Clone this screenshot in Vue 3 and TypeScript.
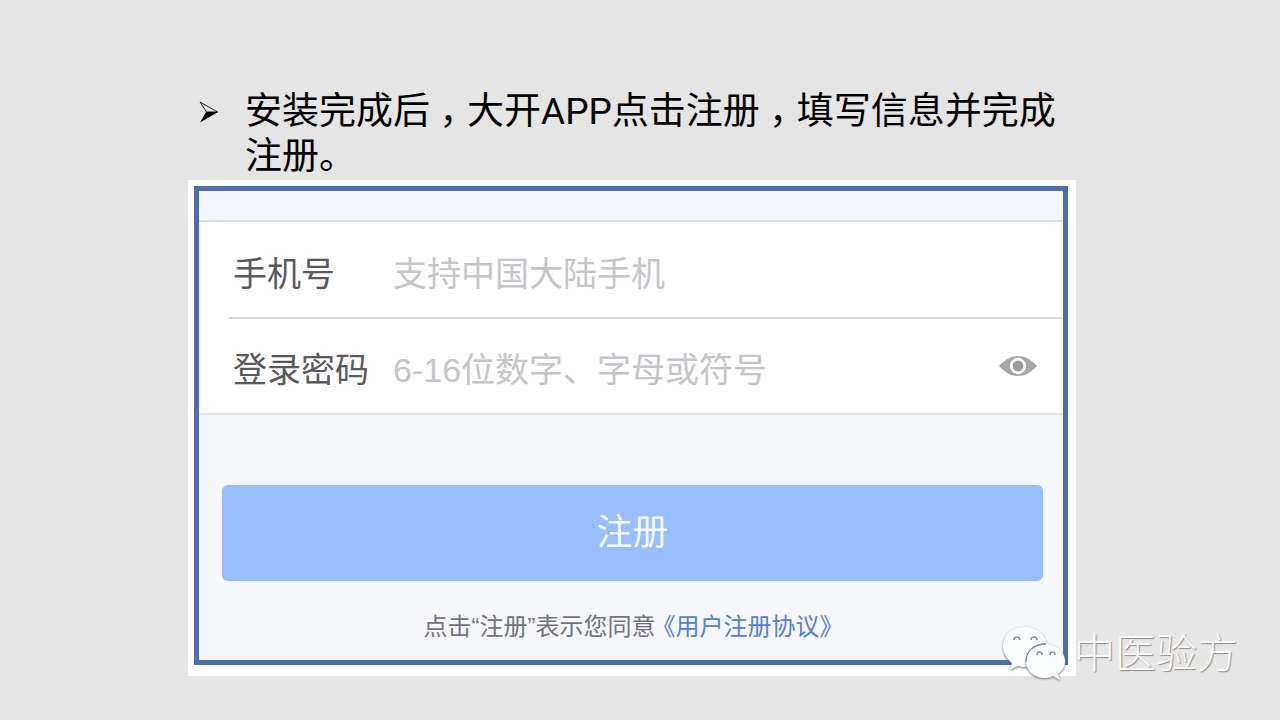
<script setup lang="ts">
import { ref } from 'vue'

const phone = ref('')
const password = ref('')
const visible = ref(false)
</script>

<template>
  <main class="slide">
    <ul class="intro">
      <li>
        <svg class="bullet" viewBox="0 0 20 22" aria-hidden="true">
          <path d="M1 1 L18.500 11 L7.500 11 Z" fill="none" stroke="#111" stroke-width="0.900" stroke-linejoin="round" />
          <path d="M7 11 L19 11 L1 21.500 Z" fill="#000" />
        </svg>
        <p>安装完成后<span class="comma">，</span>大开APP点击注册<span class="comma">，</span>填写信息并完成<br />注册。</p>
      </li>
    </ul>

    <section class="frame">
      <form class="panel" @submit.prevent>
        <div class="strip"></div>
        <div class="fields">
          <div class="row">
            <label for="phone">手机号</label>
            <input id="phone" v-model="phone" type="tel" placeholder="支持中国大陆手机" />
          </div>
          <div class="row">
            <label for="password">登录密码</label>
            <input id="password" v-model="password" :type="visible ? 'text' : 'password'" placeholder="6-16位数字、字母或符号" />
            <button class="eye" type="button" aria-label="显示密码" @click="visible = !visible">
              <svg viewBox="0 0 40 22" aria-hidden="true">
                <path d="M1 11 C8 4 13 1 20 1 C27 1 32 4 39 11 C32 18 27 21 20 21 C13 21 8 18 1 11 Z" fill="#a6a6a6" />
                <circle cx="20" cy="11" r="6.800" fill="#9c9c9c" stroke="#fff" stroke-width="2.800" />
              </svg>
            </button>
          </div>
        </div>
        <div class="actions">
          <button class="submit" type="submit">注册</button>
          <p class="terms">点击“注册”表示您同意<a href="#">《用户注册协议》</a></p>
        </div>
      </form>
    </section>

    <div class="watermark">
      <svg viewBox="0 0 66 58" aria-hidden="true">
        <g class="bubble">
          <path d="M24 2 C11 2 2 10 2 21 C2 28 6 34 11 38 L9 45 L17 41 C20 42 24 42 28 42 C39 41 46 32 46 21 C46 10 36 2 24 2 Z" />
        </g>
        <g class="bubble">
          <path d="M44 19 C33 19 25 26 25 36 C25 46 33 53 44 53 C47 53 50 52 52 51 L59 55 L57 49 C61 46 64 42 64 36 C64 26 55 19 44 19 Z" />
        </g>
        <path d="M45 19 C33 19 25 26 25 37" fill="none" stroke="#85878c" stroke-width="1.300" />
        <g fill="none" stroke="#8b8d92" stroke-width="1.600">
          <path d="M13 15 Q13 12 16 12 Q19 12 19 15" />
          <path d="M30 15 Q30 12 33 12 Q36 12 36 15" />
          <path d="M36 30 Q36 27 38.500 27 Q41 27 41 30" />
          <path d="M49 30 Q49 27 51.500 27 Q54 27 54 30" />
        </g>
      </svg>
      <span>中医验方</span>
    </div>
  </main>
</template>

<style>
body {
  margin: 0;
  background: #e5e5e5;
}
</style>

<style scoped>
.slide {
  position: relative;
  box-sizing: border-box;
  min-height: 100vh;
  padding: 89px 204px 40px 188px;
  background: #e5e5e5;
  font-family: "Liberation Sans", "Noto Sans CJK SC", sans-serif;
}

.intro {
  margin: 0;
  padding: 0 0 1px 11px;
  list-style: none;
}

.intro li {
  display: flex;
  gap: 26px;
}

.bullet {
  flex: none;
  width: 20px;
  height: 22px;
  margin-top: 12px;
}

.intro p {
  margin: 0;
  color: #000;
  font-family: Roboto, "Noto Sans CJK SC", sans-serif;
  font-size: 37px;
  line-height: 45px;
}

.comma {
  display: inline-block;
  width: 37px;
  text-align: center;
  font-feature-settings: "halt";
}

.frame {
  padding: 6px 8px 11px 6px;
  background: #fff;
}

.panel {
  border: 5px solid #4b6fac;
  background: #f5f7fb;
}

.strip {
  height: 29px;
  border-bottom: 2px solid #dbe2e7;
  background: #f3f7fb;
}

.fields {
  padding-left: 30px;
  border-bottom: 2px solid #e6e7e9;
  background: #fefefe;
}

.row {
  display: flex;
  align-items: center;
  height: 94px;
  padding: 8px 25px 0 4px;
  box-sizing: border-box;
}

.row:first-child {
  height: 97px;
  border-bottom: 2px solid #dadadb;
}

.row label {
  flex: none;
  width: 160px;
  color: #59595c;
  font-size: 34px;
  line-height: 50px;
}

.row input {
  flex: 1;
  min-width: 0;
  padding: 0;
  border: 0;
  outline: 0;
  background: transparent;
  color: #59595c;
  font: 34px/50px "Liberation Sans", "Noto Sans CJK SC", sans-serif;
}

.row input::placeholder {
  color: #c6c5c9;
  opacity: 1;
}

.eye {
  display: flex;
  padding: 0 0 8px;
  border: 0;
  background: none;
}

.eye svg {
  width: 40px;
  height: 22px;
}

.actions {
  padding: 70px 20px 15px 23px;
}

.submit {
  display: block;
  width: 100%;
  height: 96px;
  padding: 0;
  border: 0;
  border-radius: 6px;
  background: #98beff;
  color: #f4fbff;
  font: 36px/50px "Liberation Sans", "Noto Sans CJK SC", sans-serif;
}

.terms {
  display: flex;
  justify-content: center;
  gap: 8px;
  margin: 28px 0 0;
  padding-right: 10px;
  color: #737478;
  font-size: 24px;
  line-height: 36px;
}

.terms a {
  color: #5480d5;
  text-decoration: none;
  font-feature-settings: "halt";
}

.watermark {
  position: absolute;
  right: 42px;
  bottom: 36px;
  display: flex;
  align-items: center;
  gap: 7px;
  color: #fafafa;
  font-size: 41px;
  font-weight: 300;
  line-height: 60px;
  text-shadow: 1px 1px 1px #909090;
}

.watermark svg {
  width: 66px;
  height: 58px;
}

.bubble {
  fill: #fcfdff;
  filter: drop-shadow(0 1px 1px #6f7278);
}
</style>
